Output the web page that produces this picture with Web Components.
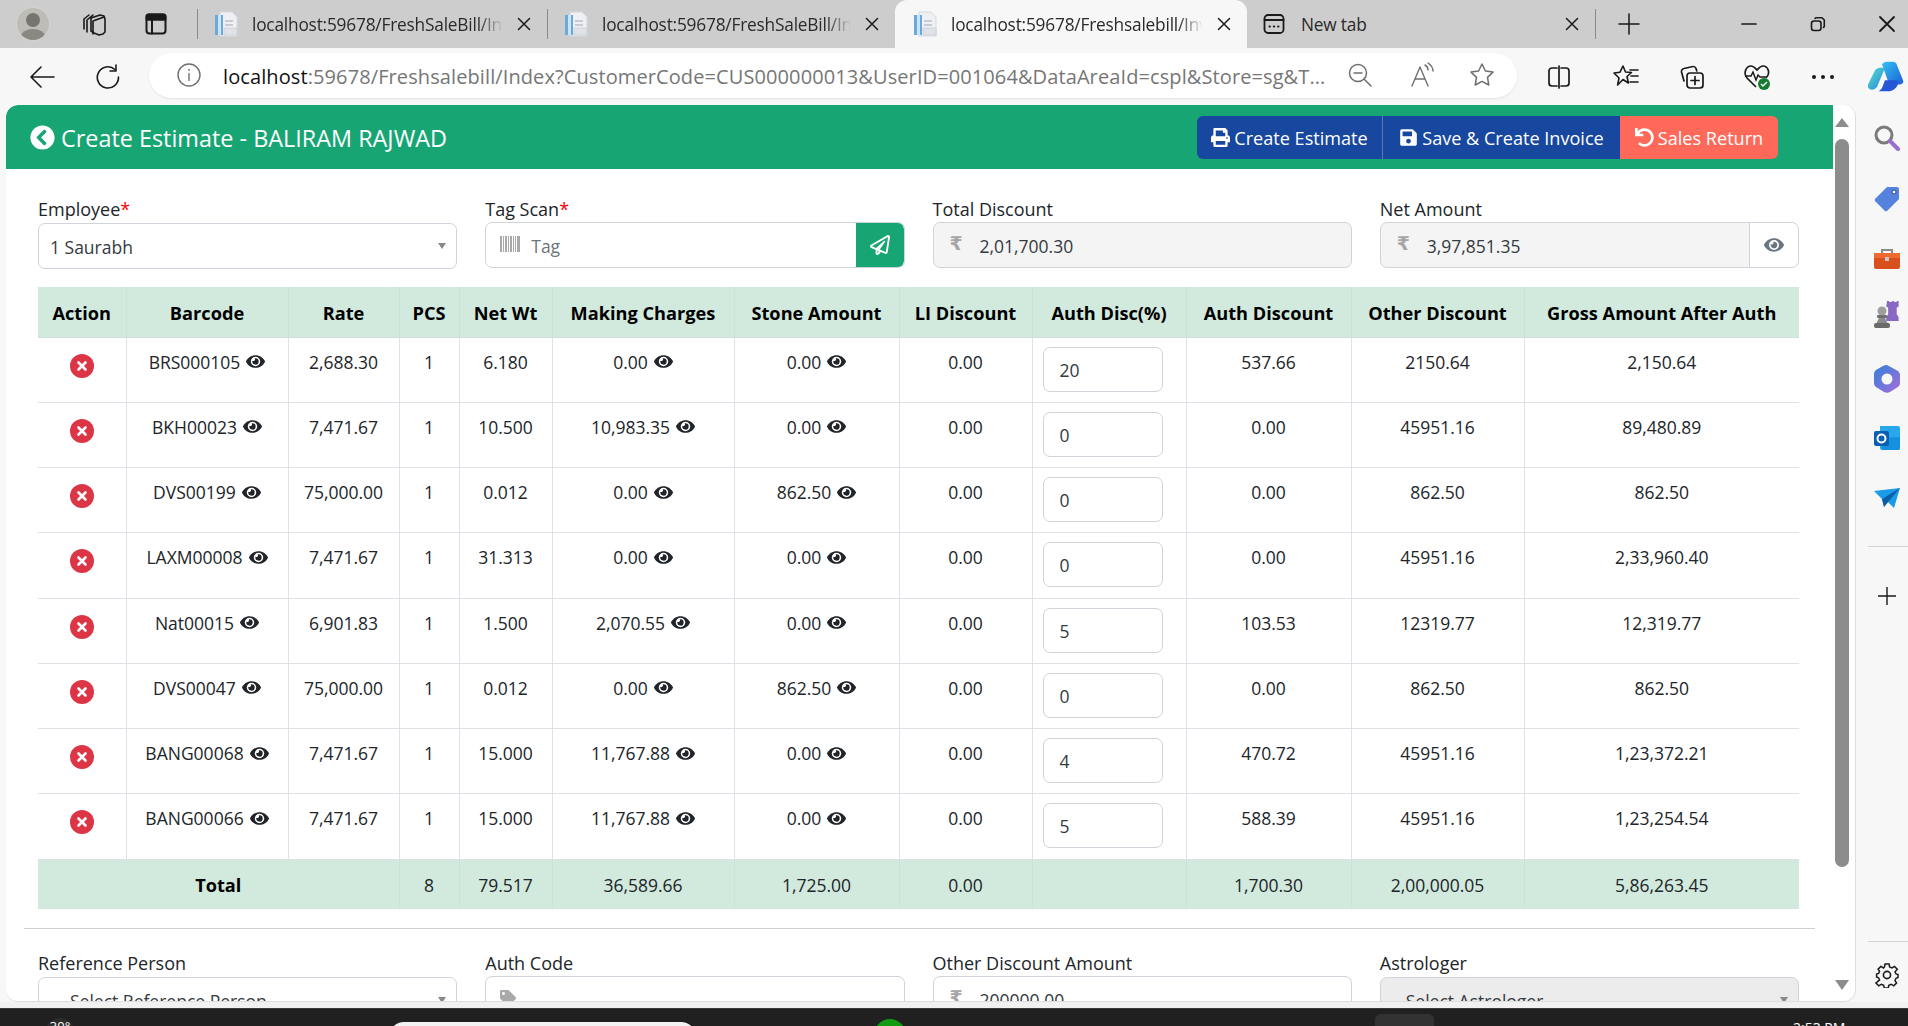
<!DOCTYPE html>
<html lang="en"><head><meta charset="utf-8"><title>Create Estimate</title>
<style>
html,body{margin:0;padding:0;height:100%;overflow:hidden;background:#f7f7f7;font-family:"Open Sans","Noto Sans",sans-serif;color:#212529}
</style></head><body>
<x-app></x-app>
<script>
const P={
 eye:['0 0 576 512','M572.52 241.4C518.29 135.59 410.93 64 288 64S57.68 135.64 3.48 241.41a32.35 32.35 0 0 0 0 29.19C57.71 376.41 165.07 448 288 448s230.32-71.64 284.52-177.41a32.35 32.35 0 0 0 0-29.19zM288 400a144 144 0 1 1 144-144 143.93 143.93 0 0 1-144 144zm0-240a95.31 95.31 0 0 0-25.31 3.79 47.85 47.85 0 0 1-66.9 66.9A95.78 95.78 0 1 0 288 160z'],
 print:['0 0 512 512','M448 192V77.25c0-8.49-3.37-16.62-9.37-22.63L393.37 9.37c-6-6-14.14-9.37-22.63-9.37H96C78.33 0 64 14.33 64 32v160c-35.35 0-64 28.65-64 64v112c0 8.84 7.16 16 16 16h48v96c0 17.67 14.33 32 32 32h320c17.67 0 32-14.33 32-32v-96h48c8.84 0 16-7.16 16-16V256c0-35.35-28.65-64-64-64zm-64 256H128v-96h256v96zm0-224H128V64h192v48c0 8.84 7.16 16 16 16h48v96zm48 72c-13.25 0-24-10.75-24-24 0-13.26 10.75-24 24-24s24 10.74 24 24c0 13.25-10.75 24-24 24z'],
 save:['0 0 448 512','M433.941 129.941l-83.882-83.882A48 48 0 0 0 316.118 32H48C21.49 32 0 53.49 0 80v352c0 26.51 21.49 48 48 48h352c26.51 0 48-21.49 48-48V163.882a48 48 0 0 0-14.059-33.941zM224 416c-35.346 0-64-28.654-64-64 0-35.346 28.654-64 64-64s64 28.654 64 64c0 35.346-28.654 64-64 64zm96-304.52V212c0 6.627-5.373 12-12 12H76c-6.627 0-12-5.373-12-12V108c0-6.627 5.373-12 12-12h228.52c3.183 0 6.235 1.264 8.485 3.515l3.48 3.48A11.996 11.996 0 0 1 320 111.48z'],
 undo:['0 0 512 512','M212.333 224.333H12c-6.627 0-12-5.373-12-12V12C0 5.373 5.373 0 12 0h48c6.627 0 12 5.373 12 12v78.112C117.773 39.279 184.26 7.47 258.175 8.007c136.906.994 246.448 111.623 246.157 248.532C504.041 393.258 393.12 504 256.333 504c-64.089 0-122.496-24.313-166.51-64.215-5.099-4.622-5.334-12.554-.467-17.42l33.967-33.967c4.474-4.474 11.662-4.717 16.401-.525C170.76 415.336 211.58 432 256.333 432c97.268 0 176-78.716 176-176 0-97.267-78.716-176-176-176-58.496 0-110.28 28.476-142.274 72.333h98.274c6.627 0 12 5.373 12 12v48c0 6.627-5.373 12-12 12z'],
 plane:['0 0 512 512','M440 6.5L24 246.4c-34.4 19.9-31.1 70.8 5.7 85.9L144 379.6V464c0 46.4 59.2 65.5 86.6 28.6l43.8-59.1 111.9 46.2c5.9 2.4 12.1 3.6 18.3 3.6 8.2 0 16.3-2.1 23.6-6.2 12.8-7.2 21.6-20 23.9-34.5l59.4-387.2c6.1-40.1-36.9-68.8-71.5-48.9zM192 464v-64.6l36.6 15.1L192 464zm212.6-28.7l-153.8-63.5L391 169.5c10.7-15.5-9.5-33.5-23.7-21.2L155.8 332.6 48 288 464 48l-59.4 387.3z'],
 back:['0 0 512 512','M256 504C119 504 8 393 8 256S119 8 256 8s248 111 248 248-111 248-248 248zM142.1 273l135.5 135.5c9.4 9.4 24.6 9.4 33.9 0l17-17c9.4-9.4 9.4-24.6 0-33.9L226.9 256l101.6-101.6c9.4-9.4 9.4-24.6 0-33.9l-17-17c-9.4-9.4-24.6-9.4-33.9 0L142.1 239c-9.4 9.4-9.4 24.6 0 34z'],
 tag:['0 0 512 512','M0 252.118V48C0 21.49 21.49 0 48 0h204.118a48 48 0 0 1 33.941 14.059l211.882 211.882c18.745 18.745 18.745 49.137 0 67.882L293.823 497.941c-18.745 18.745-49.137 18.745-67.882 0L14.059 286.059A48 48 0 0 1 0 252.118zM112 64c-26.51 0-48 21.49-48 48s21.49 48 48 48 48-21.49 48-48-21.49-48-48-48z']
};
const fa=(n,w,h,c='currentColor')=>`<svg width="${w}" height="${h}" viewBox="${P[n][0]}" fill="${c}" aria-hidden="true" style="display:inline-block;flex:none"><path d="${P[n][1]}"/></svg>`;
const line=(w,h,vb,inner,sw=1.5,c='#1a1a1a')=>`<svg width="${w}" height="${h}" viewBox="${vb}" fill="none" stroke="${c}" stroke-width="${sw}" stroke-linecap="round" stroke-linejoin="round" style="display:block;flex:none">${inner}</svg>`;
const def=(tag,html)=>customElements.define(tag,class extends HTMLElement{
  connectedCallback(){ if(this.shadowRoot)return; const r=this.attachShadow({mode:'open'}); r.innerHTML=typeof html==='function'?html(this):html; }
});
const closeX=line(14,14,'0 0 14 14','<path d="M1.5 1.5l11 11M12.5 1.5l-11 11"/>',1.5);
const fav=`<svg width="24" height="26" viewBox="0 0 24 26" style="display:block;flex:none"><path d="M6 1h12l5 5v19H6z" fill="#eef0f3" stroke="#d5d9de"/><rect x="1" y="4" width="8" height="20" fill="#6aa9dc"/><rect x="4" y="4" width="3" height="20" fill="#cfe3f4"/><rect x="11" y="9" width="8" height="2" fill="#c8ccd2"/><rect x="11" y="13" width="8" height="2" fill="#c8ccd2"/><rect x="10" y="17" width="13" height="7" fill="#dfe3e8" stroke="#c5cad1" stroke-width=".6"/></svg>`;

def('x-tab',h=>{
 const a=h.hasAttribute('active');const w=h.getAttribute('w');const ic=h.getAttribute('newtab')!==null;
 return `<style>
 :host{display:flex;align-items:center;height:48px;width:${w}px;flex:none;box-sizing:border-box;padding:0 16px 0 ${h.getAttribute('pl')||16}px;${a?'background:#f7f7f7;border-radius:12px 12px 0 0;':''}}
 .t{flex:1;min-width:0;margin-left:${h.getAttribute('gap')||14}px;font-size:17.3px;white-space:nowrap;overflow:hidden;color:#2a2a2a;letter-spacing:-.2px;${ic?'':'-webkit-mask-image:linear-gradient(90deg,#000 90%,transparent 100%);mask-image:linear-gradient(90deg,#000 90%,transparent 100%);'}}
 .x{margin-left:${ic?0:14}px}
 </style>${ic?line(22,22,'0 0 22 22','<rect x="1.5" y="2" width="19" height="18" rx="3.5"/><path d="M1.5 7h19"/><path d="M6.5 13.5h.4M10.8 13.5h.4M15.1 13.5h.4" stroke-width="2"/>',1.8):fav}<span class="t"><slot></slot></span><span class="x">${closeX}</span>`;
});
def('x-tabstrip',`<style>
 :host{display:flex;align-items:center;height:48px;background:#cdcdcd;flex:none}
 .sep{width:1px;height:30px;background:#8a8a8a;flex:none}
 .lead{display:flex;align-items:center;flex:none;width:197px}
 .av{width:34px;height:34px;border-radius:50%;background:#bdbcb7;margin-left:16px;overflow:hidden;flex:none;border:1px solid #d5d5d0;box-sizing:border-box}
 .win{display:flex;align-items:center;margin-left:auto}
 .win span{width:69px;display:flex;justify-content:center}
</style>
<div class="lead">
 <div class="av"><svg width="32" height="32" viewBox="0 0 32 32" style="display:block"><circle cx="16" cy="12" r="7" fill="#777570"/><ellipse cx="16" cy="29" rx="12" ry="8" fill="#8a8883"/></svg></div>
 <span style="margin-left:31px">${line(26,26,'0 0 26 26','<path d="M3 18V8l5-4M6 21V9l6-5M10 7l9-3 4 1 1 3v13l-2 2-4 1-5-2-3-2z"/><path d="M12 10v13M12 10l11-4"/>',1.6)}</span>
 <span style="margin-left:37px">${line(24,24,'0 0 24 24','<rect x="2.5" y="2.5" width="19" height="19" rx="3"/><path d="M2.5 7.5h19M8 7.5v14"/><rect x="2.5" y="2.5" width="19" height="5" rx="2" fill="#1a1a1a"/>',2)}</span>
</div>
<div class="sep"></div><x-tab w="349">localhost:59678/FreshSaleBill/Invoice</x-tab>
<div class="sep"></div><x-tab w="347">localhost:59678/FreshSaleBill/Invoice</x-tab>
<x-tab w="352" active gap="14" pl="18">localhost:59678/Freshsalebill/Invoice</x-tab>
<x-tab w="348" newtab gap="16">New tab</x-tab>
<div class="sep"></div>
<span style="margin-left:22px">${line(22,22,'0 0 22 22','<path d="M11 1v20M1 11h20"/>',1.5)}</span>
<div class="win" style="margin-right:-13px">
 <span>${line(16,16,'0 0 16 16','<path d="M1 8h14"/>',1.7)}</span>
 <span>${line(16,16,'0 0 16 16','<rect x="1.5" y="5" width="9.5" height="9.5" rx="2.5"/><path d="M5 2.5l1-.8h6l2.3 2.3v6.5l-.8 1"/>',1.6)}</span>
 <span>${line(18,18,'0 0 18 18','<path d="M2 2l14 14M16 2L2 16"/>',1.8)}</span>
</div>`);

def('x-toolbar',`<style>
 :host{display:flex;align-items:center;height:57px;background:#f7f7f7;flex:none}
 .btn{display:flex;justify-content:center;flex:none}
 .pill{display:flex;align-items:center;height:45px;width:1368px;margin-left:14px;margin-top:-3px;background:#fff;border-radius:23px;box-shadow:0 1px 2px rgba(0,0,0,.08);flex:none;box-sizing:border-box;padding-left:27px}
 .url{width:1102px;margin-left:21px;font-size:20px;letter-spacing:.1px;white-space:nowrap;overflow:hidden;color:#767676;flex:none;padding-top:3px}
 .url b{font-weight:400;color:#111}
</style>
<span class="btn" style="width:54px;margin-left:15px">${line(26,26,'0 0 26 26','<path d="M25 13H2M12 3L2 13l10 10"/>',1.6)}</span>
<span class="btn" style="width:54px;margin-left:12px">${line(26,26,'0 0 26 26','<path d="M20 5.5A10.6 10.6 0 1 0 23.5 13"/><path d="M21 1v6h-6"/>',1.6)}</span>
<div class="pill">
 ${line(26,26,'0 0 26 26','<circle cx="13" cy="13" r="11"/><path d="M13 11.5v7M13 7.5v1"/>',1.4,'#707070')}
 <span class="url"><b>localhost</b>:59678/Freshsalebill/Index?CustomerCode=CUS000000013&amp;UserID=001064&amp;DataAreaId=cspl&amp;Store=sg&amp;T...</span>
 <span style="margin-left:23px">${line(24,24,'0 0 24 24','<circle cx="10" cy="10" r="8.5"/><path d="M6 10h8M16 16l7 7"/>',1.5,'#6f6f6f')}</span>
 <span style="margin-left:38px">${line(26,26,'0 0 26 26','<path d="M2 24L10 5l8 19M5 17h10"/><path d="M15 3c2 1 3 3 3 5M18 1c3 2 5 5 5 8"/>',1.4,'#6f6f6f')}</span>
 <span style="margin-left:33px">${line(26,26,'0 0 26 26','<path d="M13 2l3.4 7 7.6 1.1-5.5 5.3 1.3 7.6L13 19.4l-6.8 3.6 1.3-7.6L2 10.1 9.6 9z"/>',1.5,'#6f6f6f')}</span>
</div>
<span style="margin-left:30px">${line(24,24,'0 0 24 24','<path d="M10 3H5a3 3 0 0 0-3 3v12a3 3 0 0 0 3 3h5M14 3h5a3 3 0 0 1 3 3v12a3 3 0 0 1-3 3h-5M12 1v22"/>',1.7)}</span>
<span style="margin-left:42px">${line(26,26,'0 0 26 26','<path d="M10 2l2.5 6 6 .5-4.5 4 1.4 6.5L10 15.5 4.600 21 6 14 1 9l6-.8z"/><path d="M17 6h8M18 12h7M17 18h8"/>',1.6)}</span>
<span style="margin-left:40px">${line(26,26,'0 0 26 26','<path d="M5 17L2.5 8A3 3 0 0 1 5 4.5l9-2a3 3 0 0 1 3 2l.8 2.5"/><rect x="8" y="9" width="16" height="15" rx="3"/><path d="M16 12.5v8M12 16.5h8"/>',1.7)}</span>
<span style="margin-left:38px;display:block;height:28px"><svg width="28" height="28" viewBox="0 0 28 28" style="display:block"><path d="M13 24L4 15C0 10 3 3 8 3c3 0 5 3 6 4 1-1 3-4 6-4 5 0 8 7 3 12" fill="none" stroke="#1a1a1a" stroke-width="1.7"/><path d="M2 13h6l2-4 3 8 2-5 2 2h6" fill="none" stroke="#1a1a1a" stroke-width="1.5"/><circle cx="21" cy="21" r="6" fill="#137c2e"/><path d="M18 21l2 2 4-4" fill="none" stroke="#fff" stroke-width="1.5"/></svg></span>
<span style="margin-left:41px;display:flex;gap:5px"><i style="width:4px;height:4px;border-radius:50%;background:#1a1a1a"></i><i style="width:4px;height:4px;border-radius:50%;background:#1a1a1a"></i><i style="width:4px;height:4px;border-radius:50%;background:#1a1a1a"></i></span>
<span style="margin-left:34px"><svg width="36" height="32" viewBox="0 0 36 38" preserveAspectRatio="none" style="display:block"><defs><linearGradient id="c1" x1="0" y1="0" x2="1" y2="1"><stop offset="0" stop-color="#35c1f1"/><stop offset="1" stop-color="#1b5fd6"/></linearGradient><linearGradient id="c2" x1="0" y1="0" x2="1" y2="1"><stop offset="0" stop-color="#5de0c8"/><stop offset="1" stop-color="#1f87e0"/></linearGradient></defs><path d="M14 4c1-2 3-3 5-3h5c3 0 5 2 5 4l6 18c1 3-1 5-4 5h-6c-3 0-4-2-5-4z" fill="url(#c1)"/><path d="M7 11c1-2 3-3 5-3h5l-7 20c-1 4-3 6-6 6-3 0-5-3-4-6z" fill="url(#c2)"/><path d="M11 36c-2 0 2-1 3-4l3-9h11c2 0 3 2 2 4-1 5-5 9-10 9z" fill="#2456d6"/></svg></span>`);

def('x-scrollbar',`<style>
 :host{display:flex;flex-direction:column;align-items:center;width:23px;flex:none;background:#fff;border-radius:0 12px 12px 0;overflow:hidden;border-right:1px solid #dedede;box-sizing:border-box;padding:13px 4px 0 0}
 .th{width:14px;height:728px;background:#8c8c8c;border-radius:7px;margin-top:12px;flex:none}
 .u,.d{width:0;height:0;border-left:7.5px solid transparent;border-right:7.5px solid transparent;flex:none}
 .u{border-bottom:9px solid #8c8c8c}.d{border-top:10px solid #8c8c8c;margin-top:113px}
</style><div class="u"></div><div class="th"></div><div class="d"></div>`);

def('x-sidebar',`<style>
 :host{display:flex;flex-direction:column;align-items:center;width:52px;flex:none;background:#f7f7f7;height:100%;box-sizing:border-box;padding:20px 0 0 10px;overflow:hidden}
 svg{display:block;flex:none}
 hr{border:0;border-top:1px solid #d4d4d4;width:40px;margin:0 0 0 2px;flex:none}
</style>
<svg width="26" height="26" viewBox="0 0 26 26"><circle cx="10" cy="10" r="8" fill="none" stroke="#7a7a7a" stroke-width="3"/><path d="M16 16l8 8" stroke="#9a6fd0" stroke-width="4" stroke-linecap="round"/></svg>
<svg style="margin-top:35px" width="26" height="26" viewBox="0 0 26 26"><path d="M13 1h10a2 2 0 0 1 2 2v10L13 25a2 2 0 0 1-2 0L1 15a2 2 0 0 1 0-2z" fill="#5582de"/><circle cx="20" cy="6" r="2" fill="#fff" stroke="#28429b"/></svg>
<svg style="margin-top:36px" width="28" height="22" viewBox="0 0 28 22"><path d="M9 5V2h10v3" fill="none" stroke="#8a8a8a" stroke-width="2"/><rect x="1" y="5" width="26" height="16" rx="2" fill="#d9501e"/><rect x="1" y="5" width="26" height="5" fill="#ee6a33"/><rect x="12" y="9" width="4" height="4" fill="#c9c9c9"/></svg>
<svg style="margin-top:31px" width="28" height="28" viewBox="0 0 28 28"><path d="M16 0h2v2h3V0h2v2h3V0h2v7l-2 1v7l2 3v4H15v-4l2-3V8l-2-1z" transform="translate(-1 -1) scale(.95)" fill="#8b67c4"/><circle cx="9" cy="10" r="4.5" fill="#9e9e9e"/><rect x="4" y="14" width="10" height="3" rx="1" fill="#707070"/><path d="M6 17h6l3 6H3z" fill="#8a8a8a"/><rect x="1" y="22" width="16" height="5" rx="2" fill="#6a6a6a"/></svg>
<svg style="margin-top:36px" width="26" height="28" viewBox="0 0 26 28"><defs><linearGradient id="m1" x1="0" y1="0" x2="1" y2="1"><stop offset="0" stop-color="#2f80d8"/><stop offset="1" stop-color="#a86edd"/></linearGradient></defs><path d="M13 0l11 6c1 1 2 2 2 4v8c0 2-1 3-2 4l-8 5c-2 1-4 1-6 0L2 22c-1-1-2-2-2-4V9c0-2 1-3 2-4l7-4c1-1 3-1 4-1z" fill="url(#m1)"/><circle cx="13" cy="14" r="5.5" fill="#f7f7f7"/></svg>
<svg style="margin-top:32px" width="26" height="26" viewBox="0 0 26 26"><path d="M6 1h18a2 2 0 0 1 2 2v20a2 2 0 0 1-2 2H8a2 2 0 0 1-2-2z" fill="#28a8ea"/><path d="M8 13l18-1v11a2 2 0 0 1-2 2H8z" fill="#1490df"/><rect x="0" y="6" width="15" height="15" rx="2" fill="#0a5fb4"/><circle cx="7.5" cy="13.5" r="4" fill="none" stroke="#fff" stroke-width="2"/></svg>
<svg style="margin-top:37px" width="26" height="20" viewBox="0 0 26 20"><path d="M0 3L26 0 20 20l-6-6-4 5-2-8z" fill="#1a9be8"/><path d="M8 11L26 0 14 14l-4 5z" fill="#0c5eaa"/></svg>
<hr style="margin-top:38px">
<svg style="margin-top:39px" width="20" height="20" viewBox="0 0 20 20"><path d="M10 1v18M1 10h18" stroke="#1a1a1a" stroke-width="1.4"/></svg>
<div style="flex:1"></div>
<hr>
<svg style="margin:20px 0 14px" width="26" height="26" viewBox="0 0 24 24" fill="none" stroke="#1a1a1a" stroke-width="1.5"><circle cx="12" cy="12" r="3.3"/><path d="M10 2h4l.6 3 2.3 1 2.6-1.6 2.8 2.8L20 9.8l1 2.2 2 .6v3l-2 .7-1 2.2 1.5 2.6-2.8 2.8-2.6-1.6-2.3 1-.6 2.7h-4l-.6-2.7-2.3-1-2.6 1.6-2.8-2.8L4.5 18l-1-2.200-2-.7v-3l2-.6 1-2.2L3 7.2l2.800-2.800 2.600 1.600 1-1z" transform="translate(1 0) scale(.92)"/></svg>`);

def('x-action-btn',h=>`<style>
 :host{display:inline-flex;align-items:center;justify-content:center;height:43px;gap:4px;box-sizing:border-box;color:#fff;font-size:18.1px;white-space:nowrap;background:${h.getAttribute('bg')};width:${h.getAttribute('w')}px;border-right:${h.hasAttribute('sep')?'1px solid #5b77ad':'0'}}
 span{padding-top:2px}
</style>${fa(h.getAttribute('icon'),19,19)}<span><slot></slot></span>`);

def('x-page-header',`<style>
 :host{display:flex;align-items:center;height:64px;background:#17a673;color:#fff;border-radius:12px 0 0 0;box-sizing:border-box;padding-left:24px;flex:none}
 h1{margin:0 0 0 6px;padding-top:2px;font-size:23.4px;font-weight:400;white-space:nowrap}
 .g{display:flex;margin-left:auto;margin-right:55px;border-radius:6px;overflow:hidden}
</style>${fa('back',25,25)}<h1>Create Estimate - BALIRAM RAJWAD</h1>
<div class="g"><x-action-btn bg="#17479e" w="186" icon="print" sep>Create Estimate</x-action-btn><x-action-btn bg="#17479e" w="237" icon="save">Save &amp; Create Invoice</x-action-btn><x-action-btn bg="#ff695a" w="158" icon="undo">Sales Return</x-action-btn></div>`);

const barcode=`<svg width="20" height="16" viewBox="0 0 20 16" fill="#a9a9a9" style="flex:none;display:block"><rect x="0" width="2"  height="16"/><rect x="3" width="1" height="16"/><rect x="5" width="2" height="16"/><rect x="8" width="1" height="16"/><rect x="10" width="2" height="16"/><rect x="13" width="1" height="16"/><rect x="15" width="1" height="16"/><rect x="17" width="3" height="16"/></svg>`;
const rupee=`<span style="display:block;font-family:'DejaVu Sans',sans-serif;font-weight:700;font-size:19px;color:#a6a6a6;width:19px;line-height:20px;margin-top:-5px">₹</span>`;

def('x-field',h=>{
 const kind=h.getAttribute('kind'),v=h.getAttribute('value')||'';
 const req=h.hasAttribute('req')?'<i>*</i>':'';
 let box='';
 if(kind==='select'){
   box=`<div class="box sel" style="${h.hasAttribute('off')?'background:#ececec;':''}"><span class="v" style="padding-left:${h.getAttribute('ind')||11}px">${v}</span><b></b></div>`;
 } else if(kind==='tag'){
   box=`<div class="box up" style="overflow:hidden"><span style="margin-left:14px;margin-top:-2px">${barcode}</span><span class="v ph" style="margin-left:11px">Tag</span><span class="send">${fa('plane',20,20,'#fff')}</span></div>`;
 } else if(kind==='auth'){
   box=`<div class="box up"><span style="margin-left:14px">${fa('tag',16,16,'#a9a9a9')}</span></div>`;
 } else if(kind==='money'){
   box=`<div class="box up" style="background:${h.hasAttribute('off')?'#f4f4f4':'#fff'}"><span style="margin-left:16px">${rupee}</span><span class="v" style="margin-left:11px">${v}</span>${h.hasAttribute('eye')?`<span class="ey">${fa('eye',20,18,'#6a7580')}</span>`:''}</div>`;
 }
 return `<style>
 :host{display:block;min-width:0}
 label{display:block;font-size:18px;line-height:24px;color:#212529;margin-bottom:2px;white-space:nowrap}
 label i{color:#f00;font-style:normal}
 .box{display:flex;align-items:center;height:46px;box-sizing:border-box;border:1px solid #d0d3da;border-radius:7px;background:#fff;font-size:17.5px;color:#343a40}
 .v{padding-top:2px}
 .up{margin-top:-1px}
 .sel{border-color:#cfd4dc}
 .sel b{margin-left:auto;margin-right:10px;width:0;height:0;border-left:4px solid transparent;border-right:4px solid transparent;border-top:6px solid #888}
 .ph{color:#6c757d}
 .send{margin-left:auto;width:48px;height:46px;background:#17a673;display:flex;align-items:center;justify-content:center;border-radius:0 7px 7px 0;flex:none}
 .ey{margin-left:auto;width:48px;height:44px;border-left:1px solid #d0d3da;background:#fff;border-radius:0 7px 7px 0;display:flex;align-items:center;justify-content:center;flex:none}
 </style><label>${h.getAttribute('label')}${req}</label>${box}`;
});

const eyeDark=fa('eye',19,17,'#212529');
const e=s=>`<span class="wi">${s} ${eyeDark}</span>`;
const rows=[
 ['BRS000105','2,688.30','1','6.180','0.00','0.00','20','537.66','2150.64','2,150.64'],
 ['BKH00023','7,471.67','1','10.500','10,983.35','0.00','0','0.00','45951.16','89,480.89'],
 ['DVS00199','75,000.00','1','0.012','0.00','862.50','0','0.00','862.50','862.50'],
 ['LAXM00008','7,471.67','1','31.313','0.00','0.00','0','0.00','45951.16','2,33,960.40'],
 ['Nat00015','6,901.83','1','1.500','2,070.55','0.00','5','103.53','12319.77','12,319.77'],
 ['DVS00047','75,000.00','1','0.012','0.00','862.50','0','0.00','862.50','862.50'],
 ['BANG00068','7,471.67','1','15.000','11,767.88','0.00','4','470.72','45951.16','1,23,372.21'],
 ['BANG00066','7,471.67','1','15.000','11,767.88','0.00','5','588.39','45951.16','1,23,254.54']
];
const widths=[88,162,111,60,93,182,165,133,154,165,173,275];
const heads=['Action','Barcode','Rate','PCS','Net Wt','Making Charges','Stone Amount','LI Discount','Auth Disc(%)','Auth Discount','Other Discount','Gross Amount After Auth'];
def('x-estimate-table',`<style>
 :host{display:block;margin-top:18px}
 table{border-collapse:collapse;table-layout:fixed;width:1761px;font-size:17.5px;color:#212529}
 th,td{border:1px solid #dee2e6;text-align:center;padding:0;box-sizing:border-box}
 table tr>*:first-child{border-left:0}table tr>*:last-child{border-right:0}
 thead tr,tfoot tr{background:#d2e9dd}
 thead th{height:50px;font-size:18.2px;font-weight:700;color:#000;border-top:0;border-color:#cfe0d8;white-space:nowrap;padding-top:2px}
 tbody td{height:65.25px;vertical-align:top;padding-top:12px;line-height:24px}
 tfoot td{height:50px;border-color:#cfe0d8;border-bottom:0;padding-top:1px}
 tfoot .tt{font-weight:700;color:#000;font-size:18.2px}
 .wi{display:inline-flex;align-items:center;gap:6px;white-space:nowrap}
 .del{display:block;width:24px;height:24px;margin:4px auto 0}
 td.inp{padding:9px 0 0 10px;text-align:left}
 .in{display:block;width:120px;height:45px;box-sizing:border-box;border:1px solid #d0d3da;border-radius:7px;background:#fff;padding:10px 0 0 16px;line-height:24px;color:#343a40}
</style><table><colgroup>${widths.map(w=>`<col style="width:${w}px">`).join('')}</colgroup>
<thead><tr>${heads.map(t=>`<th>${t}</th>`).join('')}</tr></thead>
<tbody>${rows.map(r=>`<tr><td><svg class="del" viewBox="0 0 24 24"><circle cx="12" cy="12" r="12" fill="#dc3545"/><path d="M8.5 8.5l7 7M15.5 8.5l-7 7" stroke="#fff" stroke-width="2.6" stroke-linecap="round"/></svg></td><td>${e(r[0])}</td><td>${r[1]}</td><td>${r[2]}</td><td>${r[3]}</td><td>${e(r[4])}</td><td>${e(r[5])}</td><td>0.00</td><td class="inp"><span class="in">${r[6]}</span></td><td>${r[7]}</td><td>${r[8]}</td><td>${r[9]}</td></tr>`).join('')}</tbody>
<tfoot><tr><td colspan="3" class="tt">Total</td><td>8</td><td>79.517</td><td>36,589.66</td><td>1,725.00</td><td>0.00</td><td></td><td>1,700.30</td><td>2,00,000.05</td><td>5,86,263.45</td></tr></tfoot></table>`);

def('x-form-grid',`<style>:host{display:grid;grid-template-columns:repeat(4,1fr);column-gap:28px}</style><slot></slot>`);

def('x-estimate-page',`<style>
 :host{display:flex;flex-direction:column;flex:1;min-width:0;overflow:hidden;background:#fff;border-radius:12px 0 0 12px}
 .body{padding:28px 34px 0 32px}
 hr{border:0;border-top:1px solid #cfcfcf;margin:19px -16px 22px -14px}
</style>
<x-page-header></x-page-header>
<div class="body">
 <x-form-grid>
  <x-field label="Employee" req kind="select" value="1 Saurabh"></x-field>
  <x-field label="Tag Scan" req kind="tag"></x-field>
  <x-field label="Total Discount" kind="money" off value="2,01,700.30"></x-field>
  <x-field label="Net Amount" kind="money" off eye value="3,97,851.35"></x-field>
 </x-form-grid>
 <x-estimate-table></x-estimate-table>
 <hr>
 <x-form-grid>
  <x-field label="Reference Person" kind="select" ind="31" value="Select Reference Person"></x-field>
  <x-field label="Auth Code" kind="auth"></x-field>
  <x-field label="Other Discount Amount" kind="money" value="200000.00"></x-field>
  <x-field label="Astrologer" kind="select" off ind="25" value="Select Astrologer"></x-field>
 </x-form-grid>
</div>`);

def('x-taskbar',`<style>
 :host{display:flex;height:18px;background:#202020;border-top:1px solid #3a3a3a;box-sizing:border-box;overflow:hidden;flex:none;color:#fff;font-size:14px}
 .b{width:28px;height:28px;margin:9px 0 0 46px;border-radius:50%;background:#2c2c2c;display:flex;justify-content:center;box-sizing:border-box;font-size:13px;line-height:16px;flex:none}
 .s{width:307px;height:30px;margin:13px 0 0 315px;background:#f2f2f2;border-radius:15px;flex:none}
 .g{width:32px;height:32px;margin:10px 0 0 178px;background:#109b10;border-radius:50%;flex:none}
 .a{width:59px;height:30px;margin:5px 0 0 469px;background:#323232;border-radius:6px;flex:none}
 .t{margin:10px 0 0 359px;line-height:18px;white-space:nowrap;flex:none}
</style><div class="b">30°</div><div class="s"></div><div class="g"></div><div class="a"></div><div class="t">2:53 PM</div>`);

def('x-app',`<style>
 :host{display:flex;flex-direction:column;height:1026px;width:1908px;overflow:hidden}
 .main{display:flex;height:897px;flex:none;padding-left:6px;background:#f7f7f7}
 .win{display:flex;flex:none;width:1850px;height:897px;border-bottom:1px solid #dedede;box-sizing:border-box;border-radius:12px}
 .gap{height:6px;background:#f1f1f1;flex:none}
</style>
<x-tabstrip></x-tabstrip><x-toolbar></x-toolbar>
<div class="main"><div class="win"><x-estimate-page></x-estimate-page><x-scrollbar></x-scrollbar></div><x-sidebar></x-sidebar></div>
<div class="gap"></div><x-taskbar></x-taskbar>`);
</script></body></html>
